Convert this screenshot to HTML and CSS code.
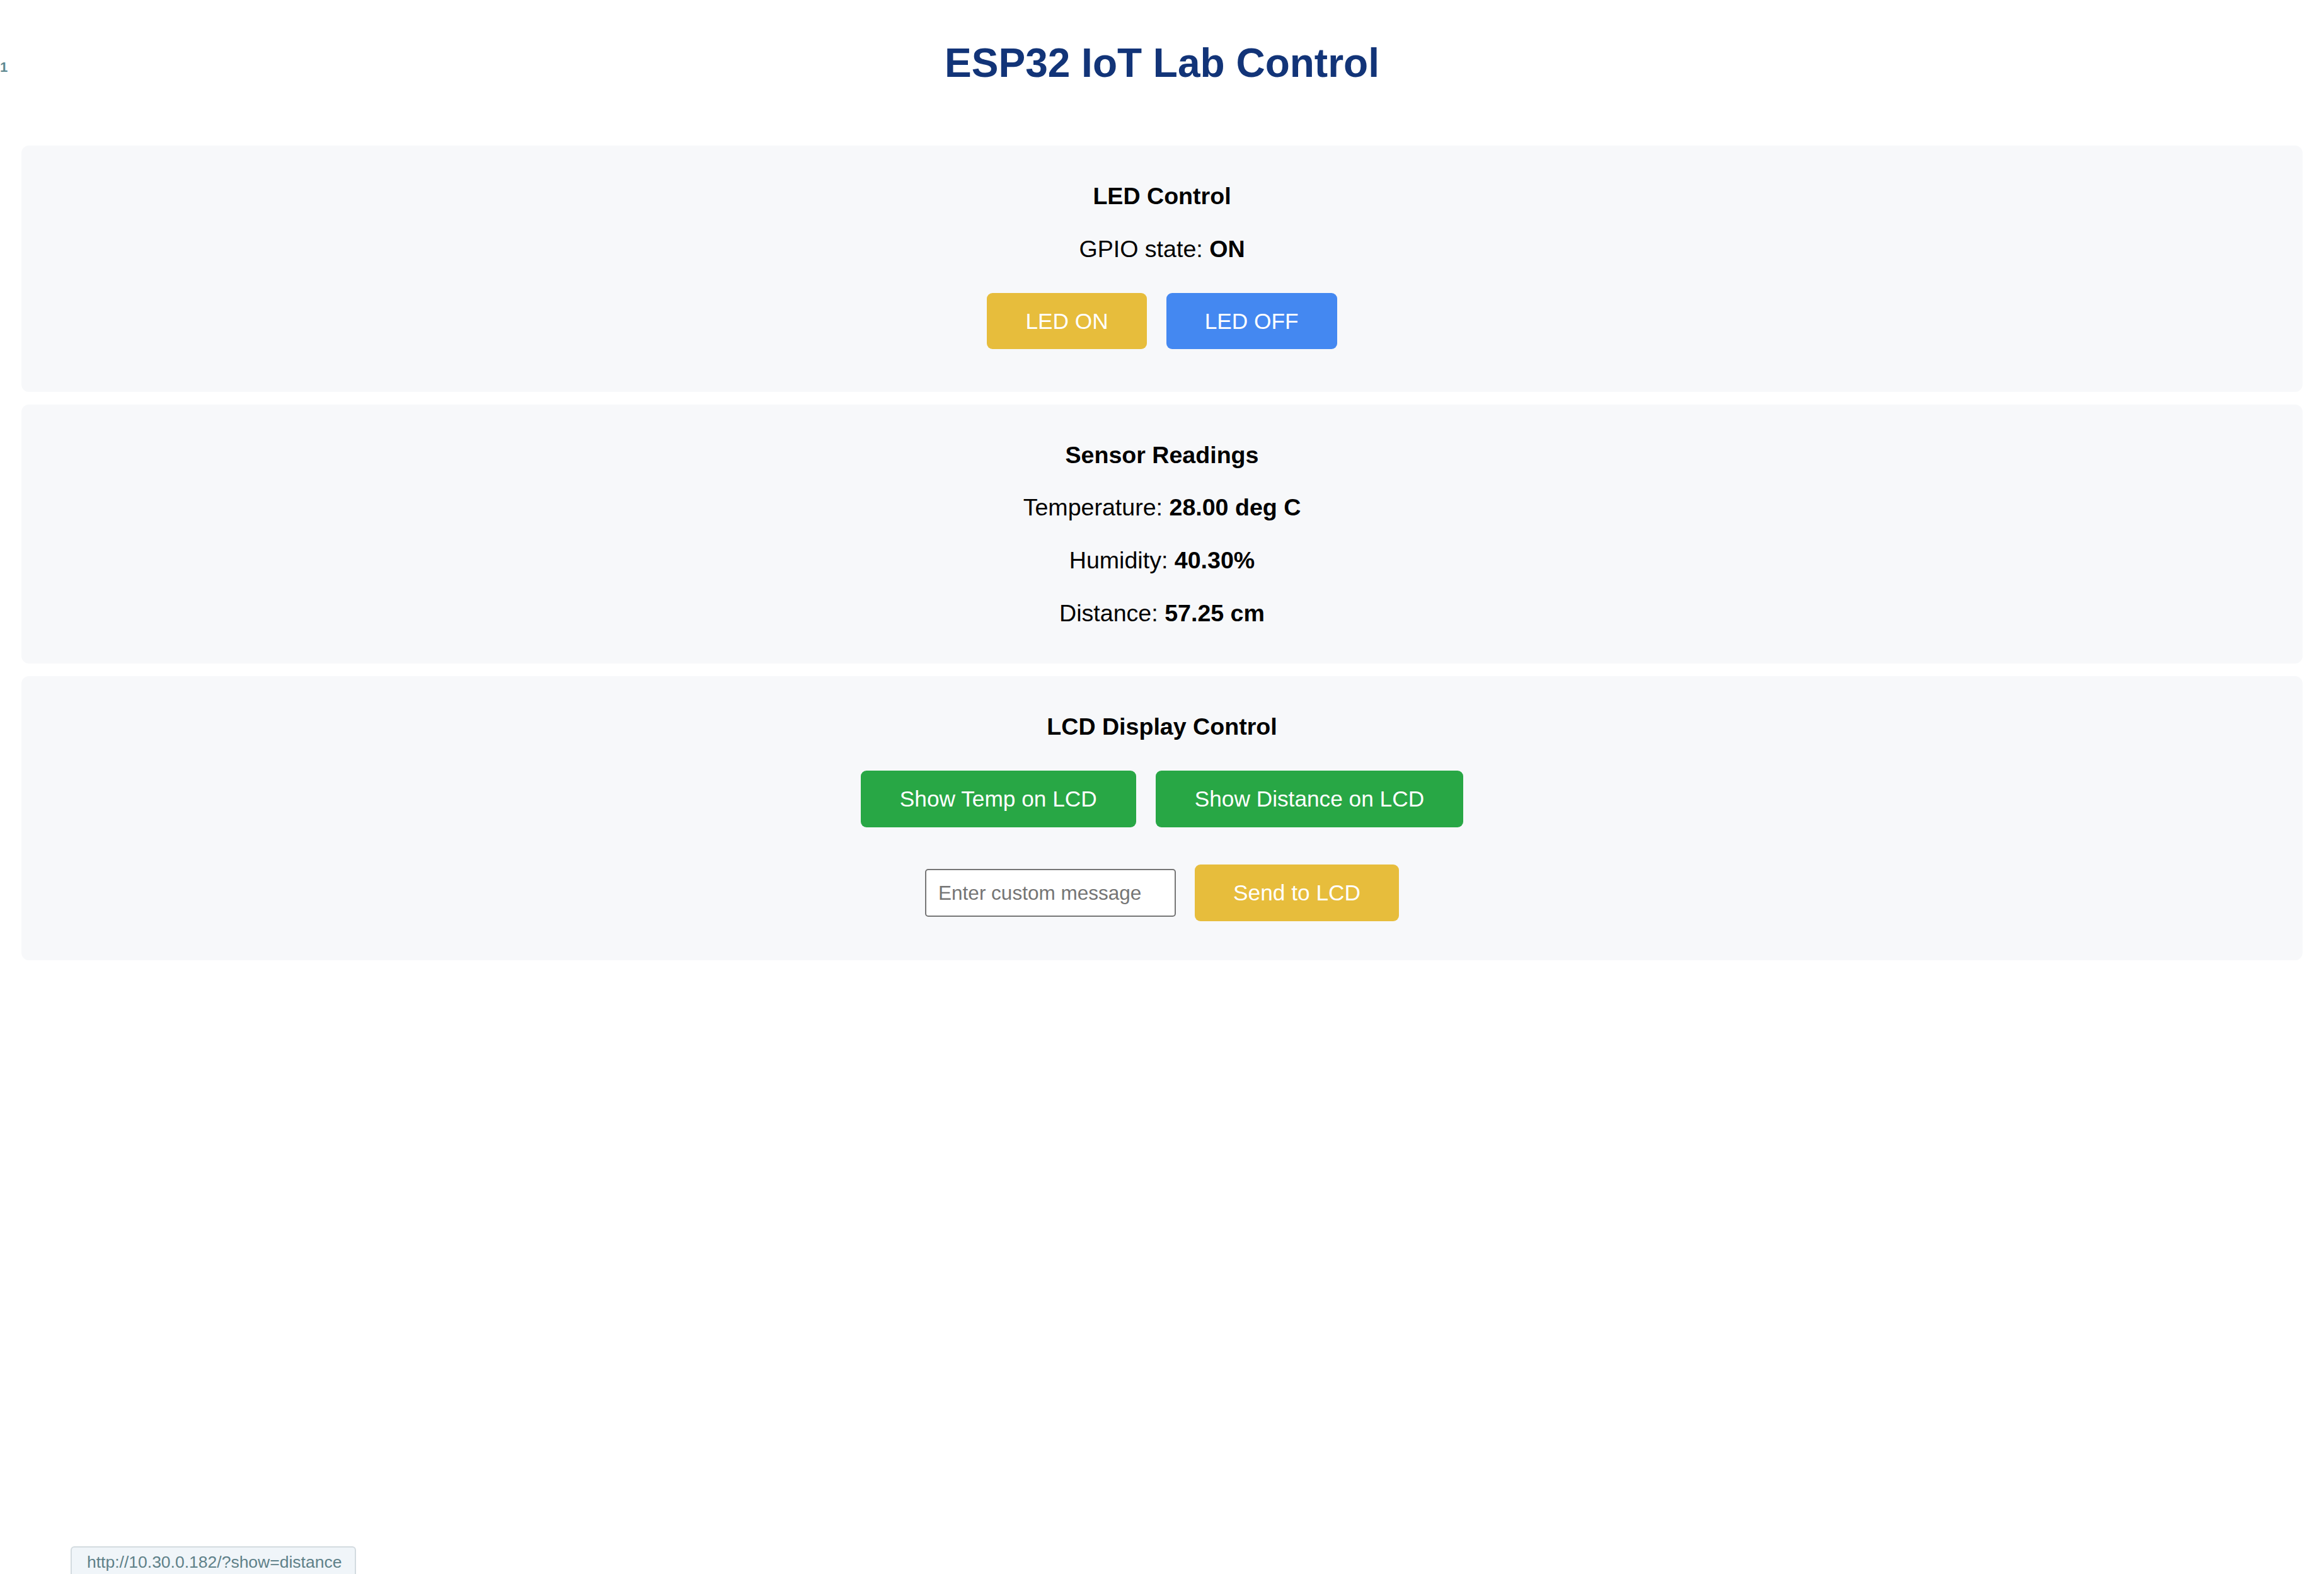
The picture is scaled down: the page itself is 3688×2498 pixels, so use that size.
FILE: index.html
```html
<!DOCTYPE html>
<html lang="en">
<head>
<meta charset="utf-8">
<title>ESP32 IoT Lab Control</title>
<link rel="stylesheet" href="styles.css">
</head>
<body>
<div class="edge-num">1</div>
<h1 class="page-title">ESP32 IoT Lab Control</h1>
<main class="cards">
  <section class="card card-led">
    <h3 class="card-title">LED Control</h3>
    <p class="line">GPIO state: <b>ON</b></p>
    <div class="btn-row">
      <button class="btn btn-gold">LED ON</button>
      <button class="btn btn-blue">LED OFF</button>
    </div>
  </section>
  <section class="card card-sensor">
    <h3 class="card-title">Sensor Readings</h3>
    <p class="line">Temperature: <b>28.00 deg C</b></p>
    <p class="line">Humidity: <b>40.30%</b></p>
    <p class="line">Distance: <b>57.25 cm</b></p>
  </section>
  <section class="card card-lcd">
    <h3 class="card-title">LCD Display Control</h3>
    <div class="btn-row">
      <button class="btn btn-green">Show Temp on LCD</button>
      <button class="btn btn-green">Show Distance on LCD</button>
    </div>
    <form class="send-row">
      <input class="msg-input" type="text" placeholder="Enter custom message">
      <button class="btn btn-gold" type="button">Send to LCD</button>
    </form>
  </section>
</main>
<div class="statusbar">http://10.30.0.182/?show=distance</div>
</body>
</html>
```
FILE: styles.css
```css
html, body {
  margin: 0;
  padding: 0;
  background: #ffffff;
}

body {
  font-family: "Liberation Sans", Arial, Helvetica, sans-serif;
  color: #000000;
}

.edge-num {
  position: absolute;
  left: 0;
  top: 95px;
  font-size: 22px;
  line-height: 24px;
  font-weight: 700;
  color: #5f8a91;
}

.page-title {
  margin: 63px 0 94px;
  font-size: 64px;
  line-height: 74px;
  font-weight: 700;
  text-align: center;
  color: #123478;
}

.cards {
  display: flex;
  flex-direction: column;
  gap: 20px;
  padding: 0 34px;
}

.card {
  background: #f7f8fa;
  border-radius: 12px;
  padding: 57px 0;
  display: flex;
  flex-direction: column;
  align-items: center;
}

.card-title {
  margin: 0;
  font-size: 37.6px;
  line-height: 46px;
  font-weight: 700;
}

.line {
  margin: 0;
  font-size: 37.6px;
  line-height: 46px;
}

.line b {
  font-weight: 700;
}

.btn-row {
  display: flex;
  gap: 31px;
  justify-content: center;
}

.btn {
  height: 90px;
  padding: 0 61px;
  border: none;
  border-radius: 9px;
  font-family: "Liberation Sans", Arial, Helvetica, sans-serif;
  font-size: 35.25px;
  color: #ffffff;
  cursor: pointer;
}

.btn-gold { background: #e7bd3c; }
.btn-blue { background: #4488f1; }
.btn-green { background: #28a745; }

/* LED card spacing */
.card-led .card-title { margin-bottom: 38px; }
.card-led .line { margin-bottom: 47px; }
.card-led .btn-row { margin-bottom: 11px; }
.card-led .btn { height: 89px; }

/* Sensor card spacing */
.card-sensor .card-title { margin-bottom: 37px; }
.card-sensor .line + .line { margin-top: 38px; }

/* LCD card spacing */
.card-lcd .card-title { margin-bottom: 47px; }
.card-lcd .btn-row { margin-bottom: 59px; }
.card-lcd .btn-row .btn { padding: 0 62px; }

.send-row {
  margin: 0 0 5px;
  display: flex;
  align-items: center;
  gap: 30px;
}

.msg-input {
  box-sizing: border-box;
  width: 398px;
  height: 76px;
  padding: 0 19px;
  border: 2px solid #767676;
  border-radius: 5px;
  background: #ffffff;
  font-family: "Liberation Sans", Arial, Helvetica, sans-serif;
  font-size: 31.5px;
  color: #000000;
}

.msg-input::placeholder {
  color: #757575;
}

.statusbar {
  position: fixed;
  left: 112px;
  bottom: -4px;
  box-sizing: border-box;
  width: 453px;
  height: 48px;
  padding: 7px 0 0 24px;
  background: #f0f5f9;
  border: 2px solid #d3dbe0;
  border-radius: 6px 6px 0 0;
  font-family: "Liberation Sans", Arial, Helvetica, sans-serif;
  font-size: 26.5px;
  line-height: 32px;
  color: #5f8189;
  white-space: nowrap;
}
```
